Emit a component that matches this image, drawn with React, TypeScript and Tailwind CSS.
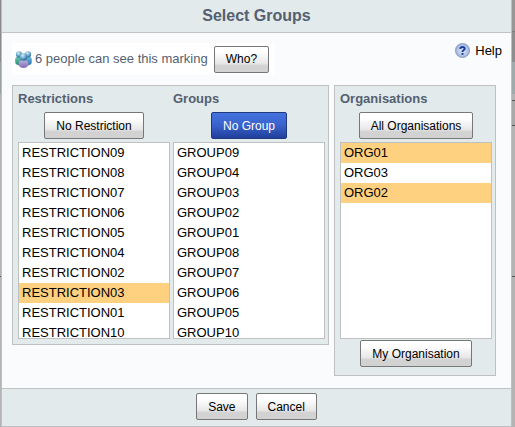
import { useState } from "react";
import type { ReactNode } from "react";

function cx(...parts: string[]) {
  return parts.join(" ");
}

type ButtonProps = { children: ReactNode; active?: boolean; onClick?: () => void };

function Button({ children, active = false, onClick }: ButtonProps) {
  return (
    <button
      type="button"
      onClick={onClick}
      className={cx(
        "h-[27px] shrink-0 rounded-[2px] border px-[11px] text-[12px] leading-[16px] whitespace-nowrap",
        active
          ? "border-[#1f3a7c] bg-linear-to-b from-[#4573de] via-[#3a62cc] to-[#1f3f9b] text-white"
          : "border-[#777] bg-linear-to-b from-white from-20% via-[#e8e8e8] via-65% to-[#d2d2d2] to-75% text-black",
      )}
    >
      {children}
    </button>
  );
}

type ListColumnProps = {
  id: string;
  title: string;
  action: string;
  active?: boolean;
  items: string[];
  initial: string[];
  footer?: ReactNode;
};

function ListColumn({ id, title, action, active, items, initial, footer }: ListColumnProps) {
  const [selected, setSelected] = useState(initial);
  return (
    <div className="flex min-w-0 flex-col">
      <label htmlFor={id} className="pt-[5px] pb-[5px] text-[13px] leading-[16px] font-bold text-[#555f70]">
        {title}
      </label>
      <div className="flex justify-center pb-[3px]">
        <Button active={active}>{action}</Button>
      </div>
      <select
        id={id}
        multiple
        value={selected}
        onChange={(e) => setSelected(Array.from(e.target.selectedOptions, (o) => o.value))}
        className="h-[197px] w-full appearance-none overflow-hidden rounded-none border border-[#bfc1c1] bg-white p-0 text-[13px] text-black outline-none"
      >
        {items.map((item) => (
          <option
            key={item}
            value={item}
            className="h-5 px-[3px] pt-[2px] pb-0 text-black checked:bg-[#fed180] checked:text-black"
          >
            {item}
          </option>
        ))}
      </select>
      {footer}
    </div>
  );
}

function PeopleIcon() {
  return (
    <svg width="17" height="17" viewBox="0 0 17 17" aria-hidden="true" className="shrink-0">
      <defs>
        <radialGradient id="head" cx="0.4" cy="0.3" r="0.7">
          <stop offset="0" stopColor="#d8eef8" />
          <stop offset="0.5" stopColor="#78b2d2" />
          <stop offset="1" stopColor="#24699a" />
        </radialGradient>
        <linearGradient id="blue" x1="0" y1="0" x2="0" y2="1">
          <stop offset="0" stopColor="#76bde0" />
          <stop offset="1" stopColor="#1f77ae" />
        </linearGradient>
        <linearGradient id="green" x1="0" y1="0" x2="0" y2="1">
          <stop offset="0" stopColor="#74c4b8" />
          <stop offset="1" stopColor="#1f9070" />
        </linearGradient>
        <linearGradient id="violet" x1="0" y1="0" x2="0" y2="1">
          <stop offset="0" stopColor="#c0b2de" />
          <stop offset="1" stopColor="#8069b0" />
        </linearGradient>
      </defs>
      <path d="M0.2 11V8.5Q0.2 5.5 4 5.5Q8 5.5 8 9V13.4Q4 15 1.2 13.2Q0.2 12.5 0.2 11Z" fill="url(#green)" />
      <path d="M16.8 11V8.5Q16.8 5.5 13 5.5Q9 5.5 9 9V13.4Q13 15 15.8 13.2Q16.8 12.5 16.8 11Z" fill="url(#blue)" />
      <circle cx="4" cy="3.4" r="3.1" fill="url(#head)" />
      <circle cx="13" cy="3.4" r="3.1" fill="url(#head)" />
      <path d="M3.6 14.5V12.5Q3.6 9 8.5 9T13.4 12.5V14.5Q11.5 17 8.5 17T3.6 14.5Z" fill="url(#violet)" />
      <circle cx="8.5" cy="5.9" r="3.6" fill="url(#head)" />
    </svg>
  );
}

function HelpIcon() {
  return (
    <svg width="15" height="15" viewBox="0 0 15 15" aria-hidden="true" className="shrink-0">
      <defs>
        <radialGradient id="help" cx="0.5" cy="0.5" r="0.5">
          <stop offset="0" stopColor="#dce6f7" />
          <stop offset="0.7" stopColor="#b4c7e8" />
          <stop offset="1" stopColor="#8ea2cc" />
        </radialGradient>
      </defs>
      <circle cx="7.5" cy="7.5" r="7.1" fill="url(#help)" stroke="#8093be" strokeWidth="0.7" />
      <path d="M5.2 5.8Q5.4 4 7.5 4T9.7 5.7Q9.7 6.6 8.5 7.3Q7.5 7.9 7.5 9" fill="none" stroke="#1d3d9b" strokeWidth="1.9" />
      <rect x="6.5" y="10" width="2" height="1.8" fill="#1d3d9b" />
    </svg>
  );
}

const restrictions = ["09", "08", "07", "06", "05", "04", "02", "03", "01", "10"].map((n) => "RESTRICTION" + n);
const groups = ["09", "04", "03", "02", "01", "08", "07", "06", "05", "10"].map((n) => "GROUP" + n);

export default function App() {
  return (
    <div className="flex min-h-screen font-['Liberation_Sans',Arial,sans-serif]">
      <div className="flex w-px flex-col bg-[#b4b4b4]">
        <div className="h-[62px] bg-[#8a8a8a]" />
        <div className="h-8 bg-[#9a9f9f]" />
        <div className="h-[183px] border-b border-[#555]" />
      </div>
      <section className="flex min-w-0 grow flex-col border-x border-b border-[#bdbfbf] bg-[#fafbfd]">
        <header className="border-b border-[#c0c3c3] bg-[#e2eaeb] py-1">
          <h1 className="text-center text-[16px] leading-[24px] font-bold text-[#555f70]">Select Groups</h1>
        </header>
        <main className="flex grow flex-col gap-[10px] pt-[10px] pr-[15px] pb-3 pl-[10px]">
          <div className="-mr-[6px] flex items-start justify-between">
            <div className="flex h-8 items-center bg-white pr-[6px] pl-[3px] text-[13px] leading-[16px] text-[#555f70]">
              <PeopleIcon />
              <span className="pr-[6px] pl-[3px] whitespace-nowrap">6 people can see this marking</span>
              <Button>Who?</Button>
            </div>
            <a href="#help" className="flex items-center gap-[5px] text-[13px] leading-[15px] text-black">
              <HelpIcon />
              Help
            </a>
          </div>
          <div className="grid grid-cols-[317fr_162fr] items-start gap-[5px]">
            <div className="grid grid-cols-2 gap-[3px] border border-[#bfc1c1] bg-[#e2eaeb] pr-[3px] pb-[5px] pl-[5px]">
              <ListColumn
                id="restrictions"
                title="Restrictions"
                action="No Restriction"
                items={restrictions}
                initial={["RESTRICTION03"]}
              />
              <ListColumn id="groups" title="Groups" action="No Group" active items={groups} initial={[]} />
            </div>
            <div className="border border-[#bfc1c1] bg-[#e2eaeb] pr-[3px] pb-2 pl-[5px]">
              <ListColumn
                id="organisations"
                title="Organisations"
                action="All Organisations"
                items={["ORG01", "ORG03", "ORG02"]}
                initial={["ORG01", "ORG02"]}
                footer={
                  <div className="flex justify-center pt-px">
                    <Button>My Organisation</Button>
                  </div>
                }
              />
            </div>
          </div>
        </main>
        <footer className="flex justify-center gap-2 border-t border-[#c0c3c3] bg-[#e2eaeb] pt-1 pb-[6px]">
          <Button>Save</Button>
          <Button>Cancel</Button>
        </footer>
      </section>
      <div className="flex w-[3px] flex-col bg-[#b4b4b4]">
        <div className="h-8 border-b border-[#7c7c7c] bg-[#979797]" />
        <div className="h-[30px] bg-[#8e8e8e]" />
        <div className="h-8 bg-[#a1aaaa]" />
        <div className="h-[7px] border-b border-[#555] bg-[#b4b4b4]" />
        <div className="h-[25px] border-b border-[#555] bg-[#a9a9a9]" />
        <div className="h-[151px] border-b border-[#555]" />
      </div>
    </div>
  );
}
